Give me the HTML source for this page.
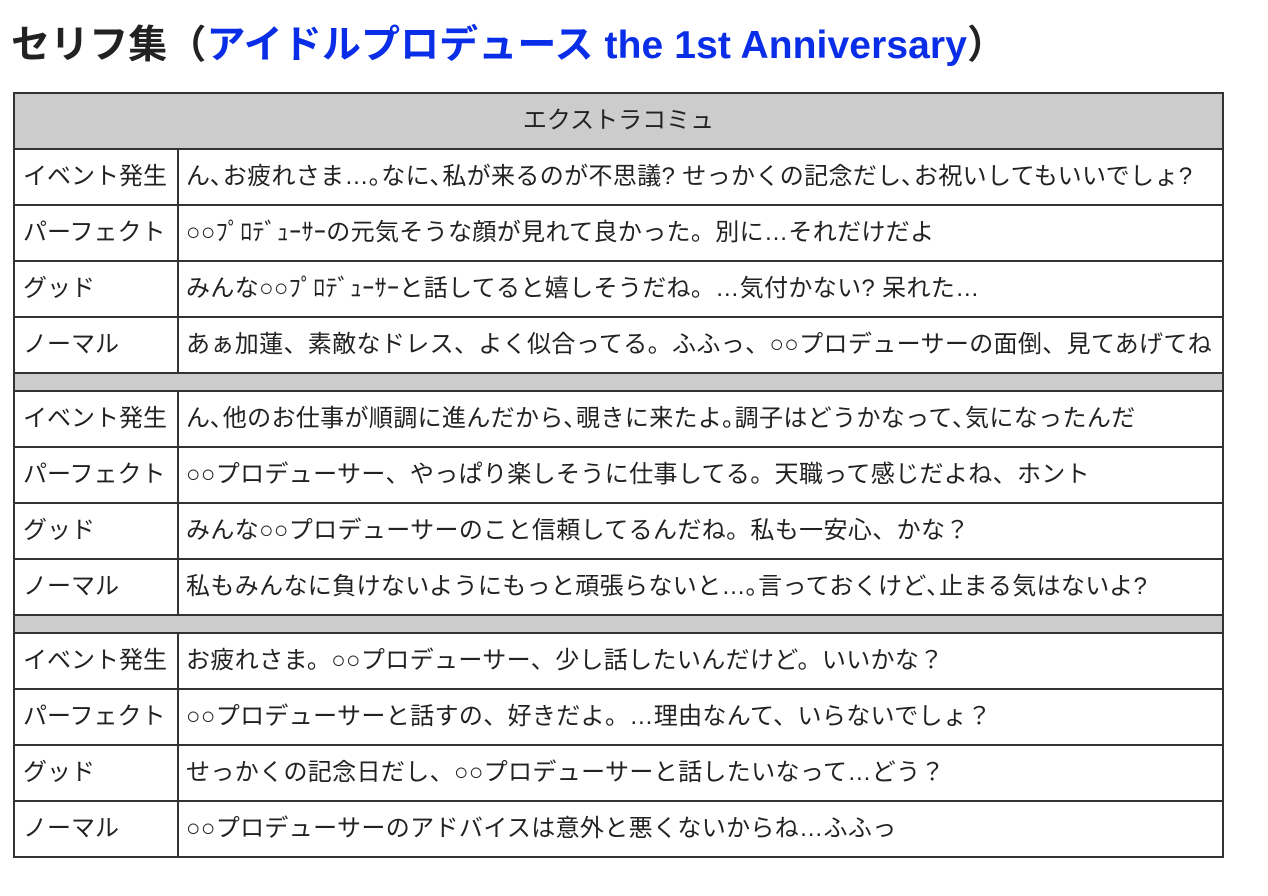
<!DOCTYPE html>
<html><head><meta charset="utf-8">
<style>
body{margin:0;background:#fff;font-family:"Liberation Sans","Noto Sans CJK JP",sans-serif;color:#222;}
h1{position:absolute;left:11px;top:22px;margin:0;font-size:39px;font-weight:bold;line-height:48px;white-space:nowrap;color:#222;letter-spacing:0.1px;}
h1 a{color:#0a2ee8;text-decoration:none;}
table{position:absolute;left:13px;top:92px;border-collapse:collapse;table-layout:fixed;width:1211px;}
td,th{border:2px solid #333;font-size:24px;line-height:30px;font-weight:normal;white-space:nowrap;overflow:hidden;padding:0 0 0 8px;height:54px;text-align:left;}
th{background:#ccc;text-align:center;padding:0;}
td.c2{padding-left:7px;letter-spacing:0.36px;}
tr.sep td{background:#ccc;height:16px;padding:0;}
</style></head><body>
<h1>セリフ集（<a>アイドルプロデュース the 1st Anniversary</a>）</h1>
<table>
<colgroup><col style="width:164px"><col></colgroup>
<tr><th colspan="2">エクストラコミュ</th></tr>
<tr><td>イベント発生</td><td class="c2">ん､お疲れさま…｡なに､私が来るのが不思議? せっかくの記念だし､お祝いしてもいいでしょ?</td></tr>
<tr><td>パーフェクト</td><td class="c2">○○ﾌﾟﾛﾃﾞｭｰｻｰの元気そうな顔が見れて良かった。別に…それだけだよ</td></tr>
<tr><td>グッド</td><td class="c2">みんな○○ﾌﾟﾛﾃﾞｭｰｻｰと話してると嬉しそうだね。…気付かない? 呆れた…</td></tr>
<tr><td>ノーマル</td><td class="c2">あぁ加蓮、素敵なドレス、よく似合ってる。ふふっ、○○プロデューサーの面倒、見てあげてね</td></tr>
<tr class="sep"><td colspan="2"></td></tr>
<tr><td>イベント発生</td><td class="c2">ん､他のお仕事が順調に進んだから､覗きに来たよ｡調子はどうかなって､気になったんだ</td></tr>
<tr><td>パーフェクト</td><td class="c2">○○プロデューサー、やっぱり楽しそうに仕事してる。天職って感じだよね、ホント</td></tr>
<tr><td>グッド</td><td class="c2">みんな○○プロデューサーのこと信頼してるんだね。私も一安心、かな？</td></tr>
<tr><td>ノーマル</td><td class="c2">私もみんなに負けないようにもっと頑張らないと…｡言っておくけど､止まる気はないよ?</td></tr>
<tr class="sep"><td colspan="2"></td></tr>
<tr><td>イベント発生</td><td class="c2">お疲れさま。○○プロデューサー、少し話したいんだけど。いいかな？</td></tr>
<tr><td>パーフェクト</td><td class="c2">○○プロデューサーと話すの、好きだよ。…理由なんて、いらないでしょ？</td></tr>
<tr><td>グッド</td><td class="c2">せっかくの記念日だし、○○プロデューサーと話したいなって…どう？</td></tr>
<tr><td>ノーマル</td><td class="c2">○○プロデューサーのアドバイスは意外と悪くないからね…ふふっ</td></tr>
</table>
</body></html>
